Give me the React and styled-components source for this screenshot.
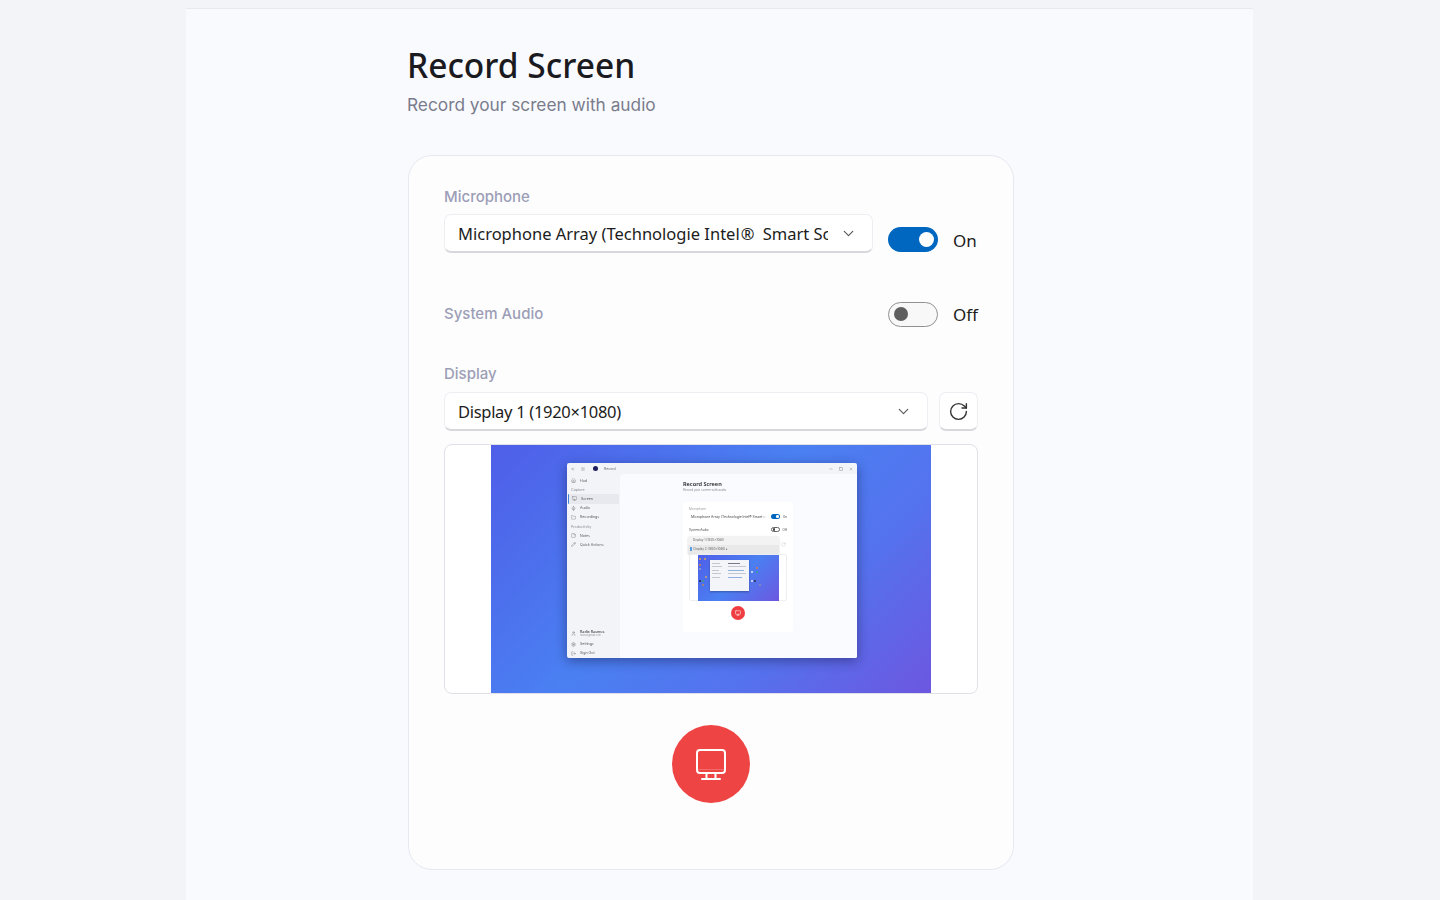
import React from 'react'
import styled, { createGlobalStyle } from 'styled-components'
import { ChevronDown, RotateCw, Monitor, Home, Mic, Folder, StickyNote, Pencil, User, Settings, LogOut, Minus, Square, X, ArrowLeft, Menu } from 'lucide-react'

const Global = createGlobalStyle`
  html, body { margin: 0; padding: 0; height: 100%; overflow: hidden; }
  body { background: #f3f4f8; font-family: "Inter", "Liberation Sans", sans-serif; }
  * { box-sizing: border-box; }
`

const Page = styled.div`
  width: 1440px;
  height: 900px;
  padding: 8px 187px 0 186px;
  overflow: hidden;
`

const Panel = styled.main`
  height: 892px;
  background: #f9fafe;
  border-top: 1px solid #e8e9ee;
  padding: 35px 0 0 221px;
`

const Title = styled.h1`
  margin: 0;
  font-family: "Noto Sans", sans-serif;
  font-weight: 500;
  font-size: 33.5px;
  line-height: 42px;
  color: #1b1b1f;
`

const Subtitle = styled.p`
  margin: 7px 0 0;
  font-size: 17.3px;
  line-height: 24px;
  color: #7a7c8c;
`

const Card = styled.section`
  width: 606px;
  height: 715px;
  margin: 38px 0 0 1px;
  padding: 31px 35px 0;
  background: #fdfdfe;
  border: 1px solid #e7e9f1;
  border-radius: 24px;
`

const Label = styled.div`
  font-size: 15px;
  font-weight: 500;
  line-height: 20px;
  color: #9c9eb6;
`

const MicRow = styled.div`
  display: flex;
  align-items: flex-start;
  gap: 15px;
  margin-top: 7px;
`

const Select = styled.div`
  flex: 1;
  min-width: 0;
  display: flex;
  align-items: center;
  height: 39px;
  padding: 0 15px 0 13px;
  background: #fff;
  border: 1px solid #eceef2;
  border-bottom: 2px solid #d7d8dc;
  border-radius: 7px;
  color: #1c1c20;
  font-family: "Noto Sans", sans-serif;
  font-size: 16.5px;
  letter-spacing: ${p => (p.$tight ? '-0.3px' : '0')};
`

const SelectText = styled.span`
  flex: 1;
  margin-right: 12px;
  white-space: nowrap;
  overflow: hidden;
`

const Mark = styled.span`
  margin: 0 4px 0 1px;
`

const SwitchWrap = styled.div`
  display: flex;
  align-items: center;
  gap: 15px;
  margin-top: ${p => p.$top || 0}px;
  width: 90px;
  color: #1c1c20;
  font-family: "Noto Sans", sans-serif;
  font-size: 17px;
`

const SwitchText = styled.span`
  padding-top: 1px;
`

const Track = styled.div`
  display: flex;
  align-items: center;
  justify-content: ${p => (p.$on ? 'flex-end' : 'flex-start')};
  width: 50px;
  height: 25px;
  padding: ${p => (p.$on ? '0 4px' : '0 5px')};
  border-radius: 13px;
  background: ${p => (p.$on ? '#0067c0' : '#f8f8f8')};
  border: ${p => (p.$on ? 'none' : '1.5px solid #919191')};
`

const Knob = styled.div`
  width: ${p => (p.$on ? 15 : 14)}px;
  height: ${p => (p.$on ? 15 : 14)}px;
  border-radius: 50%;
  background: ${p => (p.$on ? '#fff' : '#5f5f5f')};
`

const AudioRow = styled.div`
  display: flex;
  justify-content: space-between;
  align-items: center;
  height: 26px;
  margin-top: 48px;
`

const DisplayLabel = styled(Label)`
  margin-top: 37px;
`

const DisplayRow = styled.div`
  display: flex;
  gap: 11px;
  margin-top: 8px;
`

const IconButton = styled.div`
  display: flex;
  align-items: center;
  justify-content: center;
  width: 39px;
  height: 39px;
  background: #fff;
  border: 1px solid #eceef2;
  border-bottom: 2px solid #d7d8dc;
  border-radius: 7px;
  color: #333;
`

const Preview = styled.div`
  display: flex;
  justify-content: center;
  width: 534px;
  height: 250px;
  margin-top: 13px;
  background: #fff;
  border: 1px solid #dfe1e7;
  border-radius: 8px;
  overflow: hidden;
`

const Wallpaper = styled.div`
  display: flex;
  justify-content: center;
  width: 440px;
  height: 248px;
  padding: 18px 0 0 2px;
  background: linear-gradient(135deg, #4f5ee8 0%, #4a80f2 45%, #5473ee 70%, #6c57e0 100%);
`

const MiniWindow = styled.div`
  display: flex;
  flex-direction: column;
  width: 290px;
  height: 195px;
  background: #f3f4f8;
  border-radius: 2px;
  box-shadow: 0 3px 12px rgba(20, 20, 60, 0.45);
  filter: blur(0.55px);
  overflow: hidden;
`

const MiniTitleBar = styled.div`
  display: flex;
  align-items: center;
  gap: 6px;
  height: 11px;
  padding: 0 4px;
  flex: none;
  color: #666;
  font-size: 3.5px;
`

const MiniLogo = styled.div`
  width: 5px;
  height: 5px;
  margin-left: 2px;
  border-radius: 50%;
  background: #1f1d5c;
`

const Spacer = styled.div`
  flex: 1;
`

const MiniBody = styled.div`
  display: flex;
  flex: 1;
`

const MiniSide = styled.div`
  display: flex;
  flex-direction: column;
  width: 53px;
  padding: 2px 1px 0;
`

const MiniItem = styled.div`
  display: flex;
  align-items: center;
  gap: 4px;
  height: 9.2px;
  padding-left: 3px;
  border-radius: 1px;
  border-left: ${p => (p.$active ? '1px solid #3f86d8' : 'none')};
  font-size: 3.6px;
  color: ${p => (p.$head ? '#8a8a94' : '#555')};
  background: ${p => (p.$active ? '#e8e9ee' : 'transparent')};
`

const MiniUser = styled(MiniItem)`
  height: 11px;
  margin-bottom: 1px;
`

const MiniUserName = styled.div`
  font-weight: 600;
  line-height: 4px;
`

const MiniUserMail = styled.div`
  font-size: 2.4px;
  line-height: 3px;
  color: #999;
`

const MiniMain = styled.div`
  flex: 1;
  padding: 7px 0 0 63px;
  background: #fafbfe;
  border-top-left-radius: 4px;
`

const MiniH = styled.div`
  font-family: "Noto Sans", sans-serif;
  font-size: 5.6px;
  font-weight: 600;
  line-height: 7px;
  color: #222;
`

const MiniSub = styled.div`
  font-size: 3px;
  line-height: 5px;
  color: #888;
`

const MiniCard = styled.div`
  display: flex;
  flex-direction: column;
  width: 110px;
  height: 130px;
  margin-top: 8.5px;
  padding: 5px 6px 0;
  background: #fff;
  border-radius: 3px;
`

const MiniLabel = styled.div`
  font-size: 3px;
  line-height: 4px;
  color: #999;
`

const MiniMicRow = styled.div`
  display: flex;
  align-items: center;
  gap: 3px;
  height: 8px;
  margin-top: 2px;
  font-size: 3px;
  color: #444;
`

const MiniSelect = styled.div`
  display: flex;
  align-items: center;
  width: 79px;
  height: 8px;
  padding-left: 2px;
  font-size: 3.4px;
  white-space: nowrap;
  overflow: hidden;
  color: #444;
`

const MiniSelectText = styled.span`
  width: 71px;
  flex: none;
  overflow: hidden;
`

const MiniSwitch = styled.div`
  display: flex;
  align-items: center;
  justify-content: ${p => (p.$on ? 'flex-end' : 'flex-start')};
  width: 9px;
  height: 4.5px;
  padding: 0 1px;
  flex: none;
  border-radius: 3px;
  background: ${p => (p.$on ? '#0067c0' : '#fff')};
  border: ${p => (p.$on ? 'none' : '0.5px solid #666')};
`

const MiniKnob = styled.div`
  width: 2.5px;
  height: 2.5px;
  border-radius: 50%;
  background: ${p => (p.$on ? '#fff' : '#444')};
`

const MiniAudioRow = styled(MiniMicRow)`
  justify-content: flex-end;
  margin-top: 5px;
`

const MiniAudioName = styled.span`
  flex: 1;
`

const MiniMenuRow = styled.div`
  display: flex;
  align-items: center;
  gap: 2px;
  margin: 2px 0 0 -1px;
  color: #aaa;
`

const MiniMenu = styled.div`
  width: 91px;
  height: 18px;
  background: #f3f3f3;
  border-radius: 2px;
  box-shadow: 0 1px 2px rgba(0, 0, 0, 0.18);
  font-size: 3px;
  color: #666;
`

const MiniOption = styled.div`
  display: flex;
  align-items: center;
  gap: 1px;
  height: 9px;
  padding-left: ${p => (p.$active ? 2 : 5)}px;
  background: ${p => (p.$active ? '#e9e9e9' : 'transparent')};
`

const MiniCheck = styled.div`
  width: 1.5px;
  height: 4px;
  margin-right: 1px;
  background: #5aa0e0;
`

const MiniPreview = styled.div`
  display: flex;
  justify-content: center;
  width: 98px;
  height: 47px;
  flex: none;
  background: #fff;
  border: 0.5px solid #eee;
  border-radius: 2px;
`

const MiniWall = styled.div`
  position: relative;
  display: flex;
  width: 81px;
  height: 46px;
  padding: 5px 0 0 12px;
  background: linear-gradient(135deg, #4f5ee8 0%, #4a80f2 50%, #6c57e0 100%);
`

const DesktopDot = styled.div`
  position: absolute;
  left: ${p => p.$x}px;
  top: ${p => p.$y}px;
  width: 2.5px;
  height: 2.5px;
  border-radius: 1px;
  background: ${p => p.$c};
`

const TinyWindow = styled.div`
  display: grid;
  grid-template-columns: 15px 1fr;
  width: 39px;
  height: 31px;
  background: #f4f5f9;
  box-shadow: 0 1px 2px rgba(0, 0, 0, 0.3);
`

const TinySide = styled.div`
  display: flex;
  flex-direction: column;
  gap: 2.5px;
  padding: 3px 2px;
`

const TinyLine = styled.div`
  width: ${p => p.$w}px;
  height: 1px;
  background: ${p => p.$c || '#c4c6d0'};
`

const TinyMain = styled.div`
  display: flex;
  flex-direction: column;
  gap: 2.5px;
  padding: 3px 2px 0 3px;
`

const MiniRecord = styled.div`
  display: flex;
  align-items: center;
  justify-content: center;
  width: 14px;
  height: 14px;
  margin: 5px 0 0 42px;
  border-radius: 50%;
  background: #ef3e42;
  color: #fff;
`

const RecordButton = styled.button`
  display: flex;
  align-items: center;
  justify-content: center;
  width: 78px;
  height: 78px;
  margin: 31px auto 0;
  padding: 0;
  border: none;
  border-radius: 50%;
  background: #ef4444;
  color: #fff;
`

const sideTop = [
  { icon: Home, text: 'Hud' },
  { text: 'Capture', head: true },
  { icon: Monitor, text: 'Screen', active: true },
  { icon: Mic, text: 'Audio' },
  { icon: Folder, text: 'Recordings' },
  { text: 'Productivity', head: true },
  { icon: StickyNote, text: 'Notes' },
  { icon: Pencil, text: 'Quick Actions' },
]

const sideBottom = [
  { icon: Settings, text: 'Settings' },
  { icon: LogOut, text: 'Sign Out' },
]

const desktopDots = [
  { x: 1, y: 3, c: '#e2a04a' }, { x: 6, y: 3, c: '#d8a25a' }, { x: 1, y: 9, c: '#d9873f' },
  { x: 1, y: 13, c: '#9aa0c8' }, { x: 1, y: 25, c: '#2a2f4a' }, { x: 4, y: 25, c: '#3f9f7a' },
  { x: 7, y: 21, c: '#c9a074' }, { x: 4, y: 29, c: '#b98a5a' }, { x: 53, y: 16, c: '#e4e7f4' },
  { x: 58, y: 12, c: '#d4785a' }, { x: 58, y: 16, c: '#2f9fa0' }, { x: 53, y: 25, c: '#e4e7f4' },
  { x: 56, y: 25, c: '#2a2f4a' }, { x: 61, y: 29, c: '#8a90b8' },
]

const SideRow = ({ item }) => {
  const Icon = item.icon
  return (
    <MiniItem $head={item.head} $active={item.active}>
      {Icon && <Icon size={5} strokeWidth={1.5} />}
      {item.text}
    </MiniItem>
  )
}

const Nested = () => (
  <MiniWindow>
    <MiniTitleBar>
      <ArrowLeft size={4} />
      <Menu size={4} />
      <MiniLogo />
      <span>Record</span>
      <Spacer />
      <Minus size={4} />
      <Square size={4} />
      <X size={4} />
    </MiniTitleBar>
    <MiniBody>
      <MiniSide>
        {sideTop.map(item => <SideRow key={item.text} item={item} />)}
        <Spacer />
        <MiniUser>
          <User size={5} strokeWidth={1.5} />
          <div>
            <MiniUserName>Radio Rasmus</MiniUserName>
            <MiniUserMail>rasmus@mail.com</MiniUserMail>
          </div>
        </MiniUser>
        {sideBottom.map(item => <SideRow key={item.text} item={item} />)}
      </MiniSide>
      <MiniMain>
        <MiniH>Record Screen</MiniH>
        <MiniSub>Record your screen with audio</MiniSub>
        <MiniCard>
          <MiniLabel>Microphone</MiniLabel>
          <MiniMicRow>
            <MiniSelect>
              <MiniSelectText>Microphone Array (Technologie Intel® Smart Sc</MiniSelectText>
              <ChevronDown size={4} />
            </MiniSelect>
            <MiniSwitch $on><MiniKnob $on /></MiniSwitch>
            On
          </MiniMicRow>
          <MiniAudioRow>
            <MiniAudioName>System Audio</MiniAudioName>
            <MiniSwitch><MiniKnob /></MiniSwitch>
            Off
          </MiniAudioRow>
          <MiniMenuRow>
            <MiniMenu>
              <MiniOption>Display 1 (1920×1080)</MiniOption>
              <MiniOption $active><MiniCheck />Display 2 (1920×1080) ▸</MiniOption>
            </MiniMenu>
            <RotateCw size={5} strokeWidth={1.2} />
          </MiniMenuRow>
          <MiniPreview>
            <MiniWall>
              {desktopDots.map(d => <DesktopDot key={`${d.x}-${d.y}`} $x={d.x} $y={d.y} $c={d.c} />)}
              <TinyWindow>
                <TinySide>
                  <TinyLine $w={8} />
                  <TinyLine $w={10} />
                  <TinyLine $w={7} />
                  <TinyLine $w={9} />
                  <TinyLine $w={8} />
                </TinySide>
                <TinyMain>
                  <TinyLine $w={12} $c="#777a8a" />
                  <TinyLine $w={18} />
                  <TinyLine $w={16} $c="#8fb0e0" />
                  <TinyLine $w={18} />
                  <TinyLine $w={14} $c="#8fb0e0" />
                </TinyMain>
              </TinyWindow>
            </MiniWall>
          </MiniPreview>
          <MiniRecord>
            <Monitor size={6} strokeWidth={2} />
          </MiniRecord>
        </MiniCard>
      </MiniMain>
    </MiniBody>
  </MiniWindow>
)

const DesktopIcon = () => (
  <svg width="32" height="32" viewBox="0 0 32 32" fill="none" stroke="currentColor" strokeWidth="2" strokeLinecap="round" strokeLinejoin="round">
    <rect x="2" y="2" width="28" height="23" rx="3" />
    <path d="M3 21.5h26" strokeWidth="0.6" opacity="0.35" />
    <path d="M11.5 25v6M20.5 25v6M7 31h18" />
  </svg>
)

export default function App() {
  return (
    <Page>
      <Global />
      <Panel>
        <Title>Record Screen</Title>
        <Subtitle>Record your screen with audio</Subtitle>
        <Card>
          <Label>Microphone</Label>
          <MicRow>
            <Select>
              <SelectText>Microphone Array (Technologie Intel<Mark>®</Mark> Smart Sc</SelectText>
              <ChevronDown size={17} color="#555" strokeWidth={1.6} />
            </Select>
            <SwitchWrap $top={13}>
              <Track $on><Knob $on /></Track>
              <SwitchText>On</SwitchText>
            </SwitchWrap>
          </MicRow>
          <AudioRow>
            <Label>System Audio</Label>
            <SwitchWrap>
              <Track><Knob /></Track>
              <SwitchText>Off</SwitchText>
            </SwitchWrap>
          </AudioRow>
          <DisplayLabel>Display</DisplayLabel>
          <DisplayRow>
            <Select $tight>
              <SelectText>Display 1 (1920×1080)</SelectText>
              <ChevronDown size={17} color="#555" strokeWidth={1.6} />
            </Select>
            <IconButton>
              <RotateCw size={21} strokeWidth={1.6} />
            </IconButton>
          </DisplayRow>
          <Preview>
            <Wallpaper>
              <Nested />
            </Wallpaper>
          </Preview>
          <RecordButton>
            <DesktopIcon />
          </RecordButton>
        </Card>
      </Panel>
    </Page>
  )
}
